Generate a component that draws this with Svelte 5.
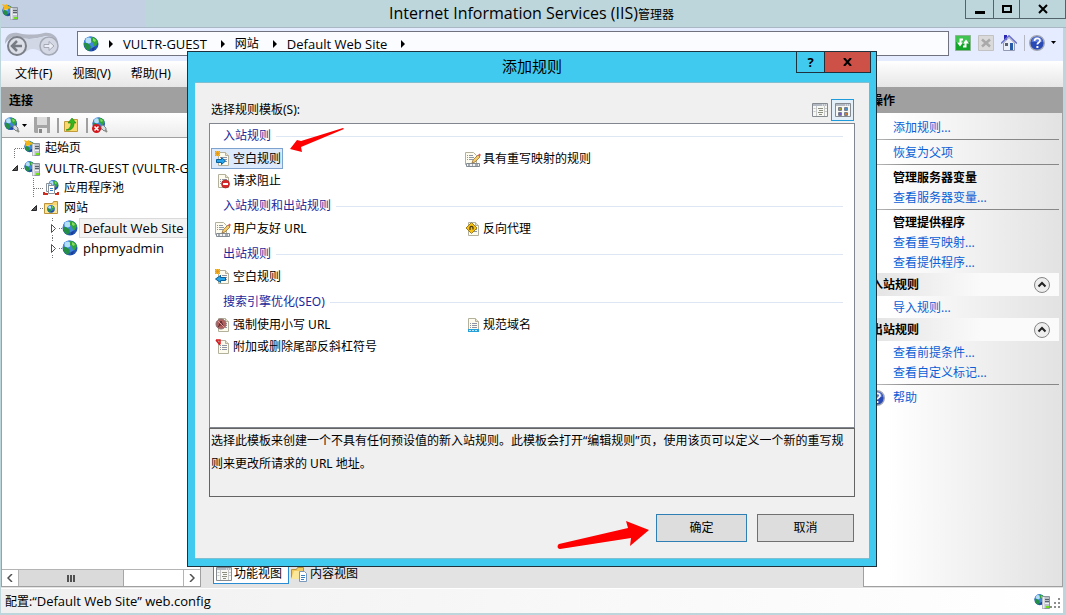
<script>
  let selected = $state('blank-in');
  let view = $state('tiles');

  const crumbs = ['VULTR-GUEST', '网站', 'Default Web Site'];
  const menus = ['文件(F)', '视图(V)', '帮助(H)'];

  const tree = [
    { label: '起始页', icon: 'start', level: 0, toggle: 'first' },
    { label: 'VULTR-GUEST (VULTR-G', icon: 'server', level: 0, toggle: 'open' },
    { label: '应用程序池', icon: 'pool', level: 1, toggle: 'branch' },
    { label: '网站', icon: 'sites', level: 1, toggle: 'open' },
    { label: 'Default Web Site', icon: 'globe', level: 2, toggle: 'closed', active: true },
    { label: 'phpmyadmin', icon: 'globe', level: 2, toggle: 'closed' }
  ];

  const groups = [
    {
      title: '入站规则',
      items: [
        { id: 'blank-in', label: '空白规则', icon: 'in' },
        { id: 'map', label: '具有重写映射的规则', icon: 'edit' },
        { id: 'block', label: '请求阻止', icon: 'block' }
      ]
    },
    {
      title: '入站规则和出站规则',
      items: [
        { id: 'friendly', label: '用户友好 URL', icon: 'edit' },
        { id: 'proxy', label: '反向代理', icon: 'proxy' }
      ]
    },
    {
      title: '出站规则',
      items: [{ id: 'blank-out', label: '空白规则', icon: 'out' }]
    },
    {
      title: '搜索引擎优化(SEO)',
      items: [
        { id: 'lower', label: '强制使用小写 URL', icon: 'lower' },
        { id: 'domain', label: '规范域名', icon: 'domain' },
        { id: 'slash', label: '附加或删除尾部反斜杠符号', icon: 'slash' }
      ]
    }
  ];

  const actions = [
    { type: 'link', text: '添加规则...' },
    { type: 'line' },
    { type: 'link', text: '恢复为父项' },
    { type: 'line' },
    { type: 'title', text: '管理服务器变量' },
    { type: 'link', text: '查看服务器变量...' },
    { type: 'line' },
    { type: 'title', text: '管理提供程序' },
    { type: 'link', text: '查看重写映射...' },
    { type: 'link', text: '查看提供程序...' },
    { type: 'section', text: '入站规则' },
    { type: 'link', text: '导入规则...' },
    { type: 'section', text: '出站规则' },
    { type: 'link', text: '查看前提条件...' },
    { type: 'link', text: '查看自定义标记...' },
    { type: 'line' },
    { type: 'link', text: '帮助', icon: true }
  ];

  // Latin labels are set one size larger than Chinese ones
  function isLatin(text) {
    return /^[\x20-\x7e]+$/.test(text);
  }
</script>

{#snippet globeShape()}
  <circle cx="8" cy="8" r="7.5" fill="#2455b5" />
  <circle cx="7" cy="6.500" r="6" fill="#3f86dc" />
  <circle cx="5.500" cy="4.500" r="3" fill="#b4defa" />
  <path d="M8 1c3-.5 6 2 7 5l-2 4-2 0-1-3-2-2z" fill="#2fa53a" />
  <path d="M1 7l3 0 3 2 1 2-2 4C3 14 1 11 1 7z" fill="#239045" />
  <path d="M10 2l3 2-1 2-2-1z" fill="#86db62" />
  <path d="M9 12l3-1-1 3-2 1z" fill="#1d3f96" />
{/snippet}

{#snippet serverShape()}
  <path d="M8.500 3.500h7v12h-7z" fill="#b9c0c7" stroke="#8b949c" />
  <path d="M8.500 4h2v11.500h-2z" fill="#e8ebee" />
  <path d="M11 6.500h4M11 8.500h4" stroke="#59626b" />
  <path d="M11 10.500h4" stroke="#eef0f2" />
  <path d="M12 13h3v2h-3z" fill="#6ee01f" />
{/snippet}

{#snippet docShape()}
  <path d="M3.500 1.500h7l3 3v10h-10z" fill="#fdfbee" stroke="#b3b09c" />
  <path d="M10.500 1.500v3h3" fill="#e5e1cc" stroke="#b3b09c" />
  <path d="M5 6.500h1M7 6.500h5M5 8.500h1M7 8.500h5M5 10.500h1M7 10.500h5" stroke="#8d94a6" />
{/snippet}

{#snippet icon(name, size = 16)}
  <svg width={size} height={size} viewBox="0 0 16 16" aria-hidden="true">
    {#if name === 'globe'}
      {@render globeShape()}
    {:else if name === 'start' || name === 'server'}
      <g transform="translate(0 1) scale(.72)">{@render globeShape()}</g>
      {@render serverShape()}
      {#if name === 'start'}
        <path d="M0 0l3 1 2-1 1 2 3 1-3 2 0 2-2-2-3 2 1-3z" fill="#f5b61c" />
      {/if}
    {:else if name === 'pool'}
      <g transform="translate(5 0) scale(.68)">{@render globeShape()}</g>
      <path d="M3.500 3.500h5v2M5.500 5.500h6v8h-6zM3.500 3.500v8h2" fill="#fff" stroke="#8a929b" />
      <path d="M7 8.500h3M7 10.500h3" stroke="#3d80c2" />
      <path d="M1 12v2h4M15 12v2h-3" stroke="#cf2c20" stroke-width="2" fill="none" />
    {:else if name === 'sites'}
      <path d="M1.500 3.500h8l1-2h4v12h-13z" fill="#f7d66f" stroke="#bd933a" />
      <path d="M2 5h12v8H2z" fill="#fbe69a" />
      <g transform="translate(4 5) scale(.5)">{@render globeShape()}</g>
    {:else if name === 'connect' || name === 'disconnect'}
      <g transform="scale(.84)">{@render globeShape()}</g>
      <path d="M9 9l2-1 3 3 0 2-2 1-3-3z" fill="#d7dcdf" stroke="#7c868d" />
      <path d="M13 13l2 2" stroke="#8c8c84" stroke-width="2" />
      {#if name === 'disconnect'}
        <circle cx="4.500" cy="11.500" r="4.500" fill="#d3181d" />
        <path d="M2.500 9.500l4 4M6.500 9.500l-4 4" stroke="#fff" stroke-width="1.500" />
      {/if}
    {:else if name === 'save'}
      <path d="M0 0h16v16H1L0 15z" fill="#a5a5a5" />
      <path d="M3 0h10v8H3z" fill="#dcdcdc" />
      <path d="M4 11h9v5H4z" fill="#ececec" />
      <path d="M5 12h3v4H5z" fill="#888" />
    {:else if name === 'up'}
      <path d="M1.500 4.500h8l1-2h4v12h-13z" fill="#f8d96c" stroke="#c29b3d" />
      <path d="M3 13c4-1 5-4 5-7H5l4-5 4 5h-2c0 5-3 8-8 7z" fill="#35b51e" stroke="#18830f" stroke-width=".6" />
    {:else if name === 'refresh'}
      <path d="M.5.5h15v15H.5z" fill="#12a52a" stroke="#8bb592" />
      <path d="M1 1h14v6H1z" fill="#3fc452" />
      <path d="M8 4.500H5.500V8M8 11.500h2.500V8" fill="none" stroke="#fff" stroke-width="2" />
      <path d="M2 7.500h6l-3 4zM8 8.500h6l-3-4z" fill="#fff" />
    {:else if name === 'stop'}
      <path d="M.5.5h15v15H.5z" fill="#dadada" stroke="#c2c2c2" />
      <path d="M4 4.500l8 7M12 4.500l-8 7" stroke="#a9a9a9" stroke-width="2.500" />
    {:else if name === 'home'}
      <path d="M3 0h3v5H3z" fill="#2b25b5" />
      <path d="M2.500 8L8 2.500 13.500 8v7.500h-11z" fill="#eceff7" stroke="#9299b3" />
      <path d="M0 8.500L8 .8l8 7.700" fill="none" stroke="#6a70cc" stroke-width="1.500" />
      <path d="M9 8h3v7H9z" fill="#255ba8" />
      <path d="M4 8h3v3H4z" fill="#56606f" />
    {:else if name === 'help'}
      <circle cx="8" cy="8" r="7.300" fill="#2949b5" stroke="#a3a7b2" stroke-width="1.400" />
      <path d="M2.500 7a5.500 5.500 0 0 1 11 0z" fill="#5876d6" />
      <path d="M5.500 6c0-3.500 5.500-3.500 5.500-.3C11 7.500 8.300 7.500 8.300 9.600" fill="none" stroke="#fff" stroke-width="1.700" />
      <path d="M7.400 11h2v2h-2z" fill="#fff" />
    {:else if name === 'list' || name === 'tiles'}
      <path d="M.5 1.500h15v13H.5z" fill="#f7f7f3" stroke="#868b91" />
      <path d="M1 2h14v2H1z" fill="#b2b9c2" />
      <path d="M10 3h1M12 3h1M14 3h1" stroke="#f8f8f8" />
      {#if name === 'list'}
        <path d="M4.500 4v10M12.500 4v10" stroke="#c4c6c7" />
        <path d="M1.500 6.500h2M1.500 9.500h2M13 6.500h2M13 9.500h2" stroke="#c4c6c7" />
        <path d="M6 6.500h5M7 8.500h4M6 10.500h5M7 12.500h3" stroke="#8c8f80" />
      {:else}
        <path d="M3.500 5.500h3v3h-3zM9.500 5.500h3v3h-3zM3.500 10.500h3v3h-3zM9.500 10.500h3v3h-3z" fill="#e8e2c4" stroke="#777e8b" />
        <path d="M4 6h2v2H4z" fill="#a09b30" /><path d="M10 6h2v2h-2z" fill="#3f91d0" />
        <path d="M4 11h2v2H4z" fill="#755ad0" /><path d="M10 11h2v2h-2z" fill="#d17a31" />
      {/if}
    {:else if name === 'content'}
      <path d="M.5 3.500h5l1-2h6v11H.5z" fill="#f1ca61" stroke="#b6913c" />
      <path d="M0 13l3-8h11l-3 8z" fill="#fbe79a" />
      <path d="M8.500 5.500h5l2 2v8h-7z" fill="#fff" stroke="#7a99bd" />
      <path d="M10 9.500h4M10 11.500h4M10 13.500h3" stroke="#3680c4" />
    {:else if name === 'edit'}
      <path d="M.5 1.500h8l3 3v9H.5z" fill="#fdfbee" stroke="#b3b09c" />
      <path d="M2 4.500h1M4 4.500h4M2 6.500h1M4 6.500h5M2 8.500h1M4 8.500h4" stroke="#8d94a6" />
      <path d="M1.500 12.500h13v3h-13z" fill="#f1f3f4" stroke="#838b93" />
      <path d="M3 14h2M7 14h1M10 14h3" stroke="#59626b" />
      <path d="M7 12l1-3 5-5 2 2-5 5z" fill="#f4cc67" stroke="#8b6232" stroke-width=".7" />
      <path d="M13 4l1.500-1.500L16 4l-1.500 1.500z" fill="#e4584e" />
    {:else}
      {@render docShape()}
      {#if name === 'in' || name === 'out'}
        <path d="M0 0h5v5H0z" fill="#f8bd33" />
        <path d="M0 0l5 5M5 0L0 5M2.500 0v5M0 2.500h5" stroke="#dd9114" stroke-width=".6" />
        {#if name === 'in'}
          <path d="M1.500 8.500h5v-2l4 3.500-4 3.500v-2h-5z" fill="#28a4e8" stroke="#08619d" />
        {:else}
          <path d="M10.500 8.500h-5v-2l-5 3.500 5 3.500v-2h5z" fill="#28a4e8" stroke="#08619d" />
        {/if}
      {:else if name === 'block'}
        <circle cx="10.500" cy="11" r="4" fill="#d7282a" stroke="#a51518" stroke-width=".6" />
        <path d="M8 10h5v2H8z" fill="#fff" />
      {:else if name === 'proxy'}
        <path d="M6.500 1.500l5.500 5.500-5.500 5.500L1 7z" fill="#f5c115" stroke="#a07d1c" />
        <path d="M5 9V6.500c0-1.500 3-1.500 3 0v2" fill="none" stroke="#4c3a0c" stroke-width="1.300" />
      {:else if name === 'lower'}
        <circle cx="6" cy="7" r="5" fill="#b2605e" stroke="#8a6e72" />
        <path d="M3.500 10L6 4l2.500 6M4.500 8h3" fill="none" stroke="#57282c" />
        <path d="M2.500 3.500l7 7" stroke="#e3a09b" />
      {:else if name === 'domain'}
        <path d="M3 12h11v3H3z" fill="#26a0da" />
        <path d="M4 13.500h9" stroke="#c1e6f6" stroke-dasharray="2 1" />
      {:else if name === 'slash'}
        <path d="M1 1h4v4M1 1l4 5" fill="none" stroke="#d91c22" stroke-width="1.500" />
      {/if}
    {/if}
  </svg>
{/snippet}

{#snippet twisty(kind)}
  <svg width="18" height="20" viewBox="0 0 18 20" aria-hidden="true">
    {#if kind === 'first'}
      <path d="M8.500 20V10.500H18" class="dots" />
    {:else if kind === 'branch'}
      <path d="M8.500 0v20M9 10.500h9" class="dots" />
    {:else if kind === 'open'}
      <path d="M11.500 7.500v5h-5z" fill="#595959" stroke="#262626" />
      <path d="M15 10.500h3" class="dots" />
    {:else}
      <path d="M8.500 0v4M8.500 17v3M15 10.500h3" class="dots" />
      <path d="M7.500 6.500l4 4-4 4z" fill="#fff" stroke="#505050" />
    {/if}
  </svg>
{/snippet}

<div class="window">
  <header class="titlebar">
    <span class="app-icon">{@render icon('start')}</span>
    <h1>Internet Information Services (IIS)<small>管理器</small></h1>
    <div class="win-buttons">
      <button aria-label="最小化">
        <svg width="10" height="10"><path d="M0 7h10v3H0z" /></svg>
      </button>
      <button aria-label="最大化">
        <svg width="10" height="10"><path d="M1 2h8v6H1z" fill="none" stroke="#000" stroke-width="2" /></svg>
      </button>
      <button class="wide" aria-label="关闭">
        <svg width="10" height="10"><path d="M1 1l8 8M9 1L1 9" stroke="#000" stroke-width="2" /></svg>
      </button>
    </div>
  </header>

  <nav class="navbar">
    <div class="history">
      <svg width="56" height="28" viewBox="0 0 56 28" aria-hidden="true">
        <path d="M0 13C0 4 5 1 13 2c8 2 18 2 26 0 8-1 14 3 14 11C50 5 43 4 37 6c-8 2-16 3-24 0C6 5 3 9 0 13z" fill="#b3b7c4" />
        <path d="M3 12C6 6 10 5 14 6c8 3 16 2 23 0 8-1 12 1 14 6l-5 12c-8 0-11-6-18-6S20 24 12 25z" fill="#d2d7e5" />
        <circle cx="12" cy="15" r="9" fill="#dcdfe7" stroke="#7b7f88" stroke-width="2" />
        <path d="M7 15h10M12 10l-5 5 5 5" fill="none" stroke="#777b84" stroke-width="2.500" />
        <circle cx="44" cy="15" r="9" fill="#d3d8e4" stroke="#a5a9b6" stroke-width="1.500" />
        <path d="M39 13.500h5v-3l5 4.500-5 4.500v-3h-5z" fill="#eceef5" stroke="#a5a9b6" />
      </svg>
    </div>
    <div class="address">
      {@render icon('globe')}
      {#each crumbs as crumb}
        <svg class="sep" width="5" height="8"><path d="M0 0l4 4-4 4z" /></svg>
        <a href="#{crumb}" class:latin={isLatin(crumb)}>{crumb}</a>
      {/each}
      <svg class="sep" width="5" height="8"><path d="M0 0l4 4-4 4z" /></svg>
    </div>
    <div class="nav-tools">
      <button aria-label="刷新">{@render icon('refresh')}</button>
      <button aria-label="停止">{@render icon('stop')}</button>
      <button aria-label="主页">{@render icon('home')}</button>
      <button class="help" aria-label="帮助">
        {@render icon('help')}
        <svg width="5" height="3"><path d="M0 0h5L2.500 3z" /></svg>
      </button>
    </div>
  </nav>

  <div class="menubar">
    {#each menus as item}
      <button>{item}</button>
    {/each}
  </div>

  <main class="panes">
    <section class="connections">
      <h2>连接</h2>
      <div class="toolbar">
        <button class="drop" aria-label="连接">
          {@render icon('connect')}
          <svg width="5" height="3"><path d="M0 0h5L2.500 3z" /></svg>
        </button>
        <button aria-label="保存">{@render icon('save')}</button>
        <i></i>
        <button aria-label="向上">{@render icon('up')}</button>
        <i></i>
        <button aria-label="断开">{@render icon('disconnect')}</button>
      </div>
      <ul class="tree">
        {#each tree as node}
          <li class="level-{node.level}">
            {@render twisty(node.toggle)}
            {@render icon(node.icon)}
            <span class:latin={isLatin(node.label)} class:active={node.active}>{node.label}</span>
          </li>
        {/each}
      </ul>
      <div class="scrollbar">
        <button aria-label="向左滚动">
          <svg width="6" height="8"><path d="M5 0L1 4l4 4" fill="none" stroke="#505050" stroke-width="1.500" /></svg>
        </button>
        <div class="track">
          <div class="thumb">
            <svg width="8" height="7"><path d="M1 0v7M4 0v7M7 0v7" stroke="#505050" stroke-width="2" /></svg>
          </div>
        </div>
        <button aria-label="向右滚动">
          <svg width="6" height="8"><path d="M1 0l4 4-4 4" fill="none" stroke="#505050" stroke-width="1.500" /></svg>
        </button>
      </div>
    </section>

    <section class="workspace">
      <div class="tabs">
        <button class="current">{@render icon('list')}功能视图</button>
        <button>{@render icon('content')}内容视图</button>
      </div>
    </section>

    <aside class="actions">
      <h2>操作</h2>
      <div class="action-list">
        {#each actions as row}
          {#if row.type === 'link'}
            <a href="#action">
              {#if row.icon}<span class="row-icon">{@render icon('help')}</span>{/if}{row.text}
            </a>
          {:else if row.type === 'line'}
            <hr />
          {:else if row.type === 'title'}
            <h3>{row.text}</h3>
          {:else}
            <div class="section">
              <h3>{row.text}</h3>
              <button aria-label="折叠">
                <svg width="16" height="16">
                  <circle cx="8" cy="8" r="7.500" fill="#eee" stroke="#858585" />
                  <path d="M4.500 9.500L8 6l3.500 3.500" fill="none" stroke="#222" stroke-width="2" />
                </svg>
              </button>
            </div>
          {/if}
        {/each}
      </div>
    </aside>
  </main>

  <footer class="status">
    <p>配置:<span class="latin">“Default Web Site” web.config</span></p>
    <div class="status-icons">
      {@render icon('server')}
      <svg width="11" height="11" fill="#8e8e8e">
        <path d="M8 0h2v2H8zM4 4h2v2H4zM8 4h2v2H8zM0 8h2v2H0zM4 8h2v2H4zM8 8h2v2H8z" />
      </svg>
    </div>
  </footer>

  <div class="dialog" role="dialog" aria-labelledby="dialog-title">
    <div class="dialog-bar">
      <h2 id="dialog-title">添加规则</h2>
      <div class="dialog-buttons">
        <button aria-label="帮助">?</button>
        <button class="close" aria-label="关闭">
          <svg width="9" height="8"><path d="M1 0l7 8M8 0L1 8" stroke="#000" stroke-width="2" /></svg>
        </button>
      </div>
    </div>
    <div class="dialog-body">
      <div class="choose">
        <span id="choose-label">选择规则模板(S):</span>
        <button class:on={view === 'list'} aria-label="列表" onclick={() => (view = 'list')}>
          {@render icon('list')}
        </button>
        <button class:on={view === 'tiles'} aria-label="图标" onclick={() => (view = 'tiles')}>
          {@render icon('tiles')}
        </button>
      </div>
      <div class="templates" role="group" aria-labelledby="choose-label">
        {#each groups as group}
          <h3>{group.title}</h3>
          <div class="items">
            {#each group.items as item}
              <div class="cell">
                <button class:selected={selected === item.id} onclick={() => (selected = item.id)}>
                  {@render icon(item.icon)}{item.label}
                </button>
              </div>
            {/each}
          </div>
        {/each}
      </div>
      <p class="description">
        选择此模板来创建一个不具有任何预设值的新入站规则。此模板会打开“编辑规则”页，使用该页可以定义一个新的重写规则来更改所请求的 URL 地址。
      </p>
      <div class="confirm">
        <button class="ok">确定</button>
        <button>取消</button>
      </div>
    </div>

    <svg class="arrow arrow-rule" width="56" height="26" viewBox="0 0 56 26" aria-hidden="true">
      <path d="M54 0L12 13 8 12 1 21l12 3-1-5L55 1z" fill="#f00" />
    </svg>
    <svg class="arrow arrow-ok" width="94" height="30" viewBox="0 0 94 30" aria-hidden="true">
      <path d="M2 24L71 8 69 1 92 10 73 26 74 18 3 29C0 29 0 25 2 24z" fill="#f00" />
    </svg>
  </div>
</div>

<style>
  :global(body) {
    font-family: "Noto Sans", "Noto Sans CJK SC", sans-serif;
    font-size: 12px;
    line-height: 20px;
    color: #000;
  }

  .window {
    position: relative;
    display: flex;
    flex-direction: column;
    min-height: 100vh;
    box-sizing: border-box;
    padding: 0 3px 2px 1px;
    background: #bdd6dc;
  }

  .window :global(*) {
    box-sizing: border-box;
  }

  h1, h2, h3, p, ul {
    margin: 0;
    padding: 0;
    font-size: 12px;
  }

  button {
    display: flex;
    align-items: center;
    justify-content: center;
    padding: 0;
    border: 0;
    background: none;
    color: inherit;
    font: inherit;
  }

  svg {
    flex: none;
    display: block;
  }

  a {
    color: inherit;
    text-decoration: none;
  }

  .latin {
    font-family: "Open Sans", "Noto Sans", sans-serif;
    font-size: 13px;
  }

  .titlebar {
    position: relative;
    display: flex;
    justify-content: center;
    height: 28px;
    margin-right: -3px;
    border-bottom: 1px solid #a9b6c4;
    background: linear-gradient(90deg, #c3cfe2 144px, #bdd6dc 144px);
  }

  .titlebar h1 {
    padding-right: 4px;
    font-family: "Open Sans", "Noto Sans CJK SC", sans-serif;
    font-size: 16px;
    font-weight: 400;
    line-height: 26px;
  }

  .titlebar small {
    font-size: 12px;
  }

  .app-icon {
    position: absolute;
    top: 4px;
    left: 1px;
  }

  .win-buttons {
    position: absolute;
    top: 0;
    right: 0;
    display: flex;
    height: 19px;
    border: 1px solid #52636c;
    border-top: 0;
  }

  .win-buttons button {
    width: 26px;
    border-right: 1px solid #52636c;
  }

  .win-buttons button:first-child {
    width: 28px;
  }

  .win-buttons .wide {
    width: 45px;
    border: 0;
  }

  .navbar {
    display: flex;
    align-items: center;
    height: 33px;
    padding: 0 5px 0 4px;
    background: #e5ecff;
  }

  .history {
    width: 72px;
  }

  .address {
    flex: 1;
    display: flex;
    align-items: center;
    height: 25px;
    margin-bottom: 2px;
    padding-left: 5px;
    border: 1px solid #70737f;
    background: #fafcff;
  }

  .address .sep {
    margin: 0 9px 0 14px;
  }

  .address .sep:nth-child(2) {
    margin-left: 10px;
  }

  .nav-tools {
    display: flex;
    gap: 7px;
    margin: 0 2px 4px 6px;
  }

  .help {
    gap: 6px;
    padding-left: 4px;
    border-left: 1px solid #b5b8c2;
  }

  .menubar {
    display: flex;
    gap: 20px;
    height: 26px;
    padding-left: 14px;
    background: linear-gradient(#fff, #e6e6e6);
  }

  .panes {
    flex: 1;
    display: flex;
    background: #e3e3e3;
  }

  .connections {
    display: flex;
    flex-direction: column;
    width: 200px;
    margin-bottom: 1px;
    border: 1px solid #a0a0a0;
    border-top: 0;
    background: #fff;
  }

  .connections h2,
  .actions h2 {
    height: 26px;
    padding-left: 7px;
    background: #a0a0a0;
    line-height: 27px;
  }

  .toolbar {
    display: flex;
    align-items: center;
    height: 25px;
    padding-left: 2px;
    border-bottom: 1px solid #a0a0a0;
    background: linear-gradient(#fff, #ececec);
  }

  .toolbar .drop {
    gap: 2px;
    margin-right: 7px;
  }

  .toolbar i {
    width: 2px;
    height: 15px;
    margin: 0 4px 0 7px;
    background: #a0a0a0;
  }

  .tree {
    flex: 1;
    list-style: none;
  }

  .tree li {
    display: flex;
    align-items: center;
    height: 20px;
    padding-left: 4px;
    white-space: nowrap;
  }

  .tree .level-1 {
    padding-left: 23px;
  }

  .tree .level-2 {
    padding-left: 42px;
  }

  .tree span {
    margin-left: 2px;
    padding: 0 3px;
    line-height: 18px;
  }

  .tree .active {
    outline: 1px solid #dadada;
    background: #f3f3f3;
  }

  .dots {
    fill: none;
    stroke: #777;
    stroke-dasharray: 1 1;
  }

  .scrollbar {
    display: flex;
    height: 17px;
    border-top: 1px solid #b4b4b4;
  }

  .scrollbar button {
    width: 17px;
    border-right: 1px solid #b4b4b4;
  }

  .scrollbar button:last-child {
    border-right: 0;
    border-left: 1px solid #b4b4b4;
  }

  .track {
    flex: 1;
  }

  .thumb {
    display: flex;
    align-items: center;
    justify-content: center;
    width: 64%;
    height: 100%;
    border-right: 1px solid #a6a6a6;
    background: #dadada;
  }

  .workspace {
    flex: 1;
    display: flex;
    align-items: flex-end;
    padding: 0 12px 4px;
  }

  .tabs {
    display: flex;
    gap: 2px;
  }

  .tabs button {
    gap: 3px;
    height: 20px;
  }

  .tabs .current {
    gap: 2px;
    padding: 0 6px 0 2px;
    border: 1px solid #2a8dd4;
    background: #fff;
  }

  .actions {
    display: flex;
    flex-direction: column;
    width: 200px;
    margin-bottom: 1px;
    border: 1px solid #a0a0a0;
    border-top: 0;
  }

  .action-list {
    flex: 1;
    padding: 5px 3px 0 0;
    background: linear-gradient(90deg, #fff 12%, #e2e2e2);
  }

  .action-list > a,
  .action-list > h3 {
    display: block;
    position: relative;
    height: 20px;
    padding-left: 29px;
  }

  .action-list a {
    color: #0a5fd6;
  }

  .row-icon {
    position: absolute;
    top: 2px;
    left: 5px;
  }

  .action-list hr {
    height: 1px;
    margin: 1px 0 3px;
    border: 0;
    background: linear-gradient(90deg, #c8c8c8, #878787 25%);
  }

  .section {
    display: flex;
    align-items: center;
    justify-content: space-between;
    height: 23px;
    margin: 0 0 2px;
    padding: 0 9px 0 7px;
    background: linear-gradient(90deg, #e2e2e2, #fafafa 60%);
  }

  .status {
    display: flex;
    align-items: center;
    justify-content: space-between;
    height: 25px;
    padding: 0 2px 0 4px;
    border-top: 1px solid #fff;
    background: linear-gradient(90deg, #f0f0f0, #fff);
  }

  .status-icons {
    display: flex;
    align-items: flex-end;
  }

  .dialog {
    position: absolute;
    inset: 51px 189px 48px 187px;
    display: flex;
    flex-direction: column;
    padding: 0 7px 7px;
    border: 1px solid #1d323c;
    background: #41caef;
  }

  .dialog-bar {
    position: relative;
    height: 30px;
    text-align: center;
  }

  .dialog-bar h2 {
    font-size: 15px;
    font-weight: 400;
    line-height: 29px;
  }

  .dialog-buttons {
    position: absolute;
    top: 0;
    right: -2px;
    display: flex;
    height: 21px;
    border: 1px solid #1d323c;
    border-top: 0;
  }

  .dialog-buttons button {
    width: 28px;
    border-right: 1px solid #1d323c;
    font-size: 13px;
    font-weight: 700;
  }

  .dialog-buttons .close {
    width: 45px;
    border: 0;
    background: #cd5146;
  }

  .dialog-body {
    flex: 1;
    display: flex;
    flex-direction: column;
    padding: 16px 14px;
    border: 1px solid #7fbfd0;
    border-width: 1px 0;
    background: #f0f0f0;
  }

  .choose {
    display: flex;
    align-items: center;
    height: 22px;
    margin-bottom: 2px;
    padding: 0 1px 0 2px;
  }

  .choose span {
    flex: 1;
  }

  .choose button {
    width: 23px;
    height: 22px;
  }

  .choose .on {
    border: 1px solid #1f9bdc;
    background: #e3f0fa;
  }

  .templates {
    flex: 1;
    border: 1px solid #82878f;
    background: #fff;
  }

  .templates h3 {
    display: flex;
    align-items: center;
    gap: 5px;
    height: 24px;
    padding: 0 11px 0 13px;
    color: #1a2a9c;
    font-weight: 400;
  }

  .templates h3::after {
    content: "";
    flex: 1;
    height: 1px;
    background: #dde6f3;
  }

  .items {
    display: grid;
    grid-template-columns: 250px 1fr;
    margin-bottom: 2px;
    padding-left: 1px;
  }

  .cell {
    height: 22px;
  }

  .cell button {
    gap: 2px;
    height: 21px;
    padding: 0 1px 0 3px;
    border: 1px solid transparent;
  }

  .cell .selected {
    border-color: #7da2ce;
    background: #dceafb;
  }

  .description {
    min-height: 69px;
    padding: 0 1px;
    border: 1px solid #646464;
    line-height: 23px;
  }

  .confirm {
    display: flex;
    justify-content: flex-end;
    gap: 10px;
    margin-top: 17px;
    padding-right: 1px;
  }

  .confirm button {
    width: 97px;
    height: 28px;
    border: 1px solid #707070;
    background: #ddd;
  }

  .confirm .ok {
    width: 91px;
    border-color: #2f7fb5;
  }

  .arrow {
    position: absolute;
  }

  .arrow-rule {
    top: 76px;
    left: 101px;
  }

  .arrow-ok {
    right: 225px;
    bottom: 16px;
  }
</style>
